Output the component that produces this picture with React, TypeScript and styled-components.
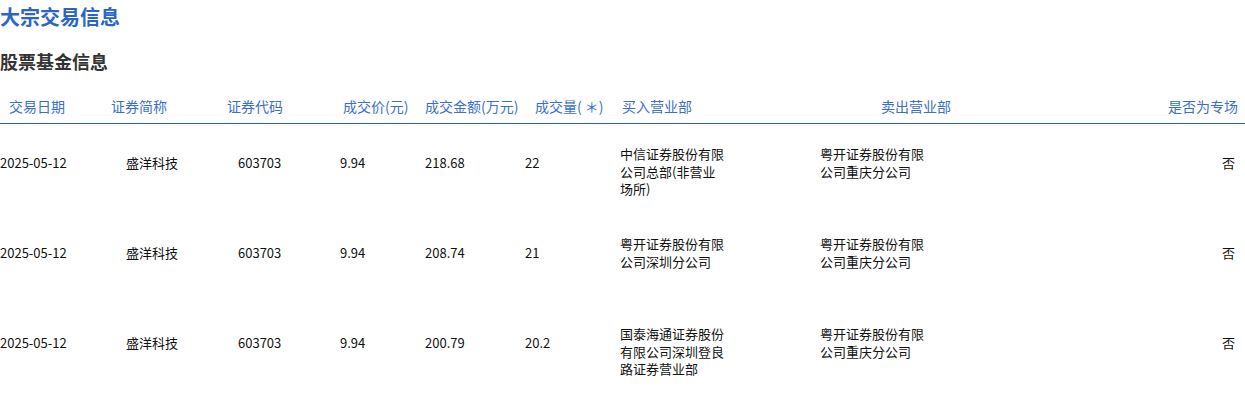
import React from "react";
import styled, { createGlobalStyle } from "styled-components";

const GlobalStyle = createGlobalStyle`
  html, body { margin: 0; padding: 0; background: #fff; }
  body { font-family: "Noto Sans CJK SC", "Noto Sans", sans-serif; color: #111; }
`;

const Page = styled.div`
  width: 1245px;
`;

const Title = styled.h1`
  margin: 0;
  font-size: 20px;
  line-height: 34px;
  font-weight: 700;
  color: #2b65c8;
`;

const SubTitle = styled.h2`
  margin: 10px 0 0;
  font-size: 18px;
  line-height: 34px;
  font-weight: 700;
  color: #333;
`;

const HeaderRow = styled.div`
  margin-top: 10px;
  display: flex;
  align-items: center;
  height: 35px;
  border-bottom: 1px solid #2f62b4;
`;

const HeaderCell = styled.div<{ $w?: number; $pl?: number; $right?: boolean }>`
  ${(p) => (p.$w ? `width: ${p.$w}px; flex: none;` : "flex: 1;")}
  box-sizing: border-box;
  padding-left: ${(p) => p.$pl ?? 0}px;
  padding-right: ${(p) => (p.$right ? 9 : 0)}px;
  text-align: ${(p) => (p.$right ? "right" : "left")};
  font-size: 14px;
  line-height: 18px;
  color: #3a70cc;
  white-space: nowrap;
`;

const Row = styled.div`
  display: flex;
  align-items: center;
  height: 90px;
  box-sizing: border-box;
  padding: 21px 0 35px;
`;

const Cell = styled.div<{ $w?: number; $right?: boolean }>`
  ${(p) => (p.$w ? `width: ${p.$w}px; flex: none;` : "flex: 1;")}
  box-sizing: border-box;
  padding-right: ${(p) => (p.$right ? 10 : 0)}px;
  font-size: 13px;
  line-height: 17px;
  color: #111;
  height: 34px;
  display: flex;
  align-items: center;
  justify-content: ${(p) => (p.$right ? "flex-end" : "flex-start")};
  white-space: nowrap;
`;

const DeptCell = styled.div<{ $w?: number }>`
  ${(p) => (p.$w ? `width: ${p.$w}px; flex: none;` : "flex: 1;")}
  height: 34px;
`;

const DeptText = styled.div`
  width: 105px;
  font-size: 13px;
  line-height: 17.5px;
  color: #111;
  word-break: break-all;
`;

const headers: { label: string; w?: number; pl?: number; right?: boolean }[] = [
  { label: "交易日期", w: 111, pl: 9 },
  { label: "证券简称", w: 116 },
  { label: "证券代码", w: 116 },
  { label: "成交价(元)", w: 82 },
  { label: "成交金额(万元)", w: 110 },
  { label: "成交量( ＊)", w: 87 },
  { label: "买入营业部", w: 259 },
  { label: "卖出营业部", w: 287 },
  { label: "是否为专场", right: true },
];

const rows = [
  {
    date: "2025-05-12",
    name: "盛洋科技",
    code: "603703",
    price: "9.94",
    amount: "218.68",
    vol: "22",
    buy: "中信证券股份有限公司总部(非营业场所)",
    sell: "粤开证券股份有限公司重庆分公司",
    special: "否",
  },
  {
    date: "2025-05-12",
    name: "盛洋科技",
    code: "603703",
    price: "9.94",
    amount: "208.74",
    vol: "21",
    buy: "粤开证券股份有限公司深圳分公司",
    sell: "粤开证券股份有限公司重庆分公司",
    special: "否",
  },
  {
    date: "2025-05-12",
    name: "盛洋科技",
    code: "603703",
    price: "9.94",
    amount: "200.79",
    vol: "20.2",
    buy: "国泰海通证券股份有限公司深圳登良路证券营业部",
    sell: "粤开证券股份有限公司重庆分公司",
    special: "否",
  },
];

export default function App() {
  return (
    <Page>
      <GlobalStyle />
      <Title>大宗交易信息</Title>
      <SubTitle>股票基金信息</SubTitle>
      <HeaderRow>
        {headers.map((h) => (
          <HeaderCell key={h.label} $w={h.w} $pl={h.pl} $right={h.right}>
            {h.label}
          </HeaderCell>
        ))}
      </HeaderRow>
      {rows.map((r, i) => (
        <Row key={i}>
          <Cell $w={126}>{r.date}</Cell>
          <Cell $w={112}>{r.name}</Cell>
          <Cell $w={102}>{r.code}</Cell>
          <Cell $w={85}>{r.price}</Cell>
          <Cell $w={100}>{r.amount}</Cell>
          <Cell $w={95}>{r.vol}</Cell>
          <DeptCell $w={200}>
            <DeptText>{r.buy}</DeptText>
          </DeptCell>
          <DeptCell $w={200}>
            <DeptText>{r.sell}</DeptText>
          </DeptCell>
          <Cell $right>{r.special}</Cell>
        </Row>
      ))}
    </Page>
  );
}
